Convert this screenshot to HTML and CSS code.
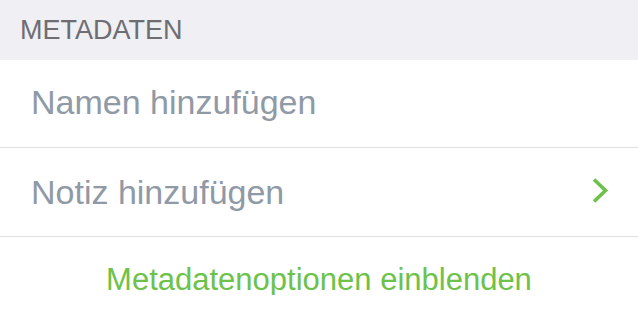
FILE: index.html
```html
<!DOCTYPE html>
<html lang="de">
<head>
  <meta charset="UTF-8" />
  <meta name="viewport" content="width=device-width, initial-scale=1.0"/>
  <title>Metadaten</title>
  <link rel="stylesheet" href="styles.css">
</head>
<body>

  <div class="section-header">METADATEN</div>

  <div class="cell-group">
    <div class="cell">
      <span class="placeholder">Namen hinzufügen</span>
    </div>
    <div class="cell cell-second">
      <span class="placeholder">Notiz hinzufügen</span>
      <svg class="chevron" width="18" height="28" viewBox="0 0 18 28">
        <path d="M3 2.5 L14.5 13.5 L3 24.5" fill="none" stroke="#6cc24a" stroke-width="3.6"/>
      </svg>
    </div>
  </div>

  <div class="options">
    <a href="#" class="options-link">Metadatenoptionen einblenden</a>
  </div>

</body>
</html>
```

FILE: styles.css
```css
body {
  font-family: 'Liberation Sans', Arial, sans-serif;
  margin: 0;
  padding: 0;
  background: #fff;
}
.section-header {
  height: 60px;
  box-sizing: border-box;
  padding: 17px 20px 0;
  background: #efeff4;
  color: #6d6d72;
  font-size: 27px;
  line-height: 27px;
}
.cell {
  display: flex;
  justify-content: space-between;
  align-items: flex-start;
  height: 88px;
  box-sizing: border-box;
  padding: 25px 29px 0 31px;
  border-bottom: 1px solid #e0e0e3;
}
.cell-second {
  height: 89px;
  padding-top: 27px;
}
.placeholder {
  font-size: 34px;
  line-height: 34px;
  color: #9099a6;
}
.chevron {
  display: block;
  margin-top: 2px;
}
.options {
  text-align: center;
  padding-top: 27px;
}
.options-link {
  font-size: 31px;
  line-height: 31px;
  color: #6cc24a;
  text-decoration: none;
}
```
